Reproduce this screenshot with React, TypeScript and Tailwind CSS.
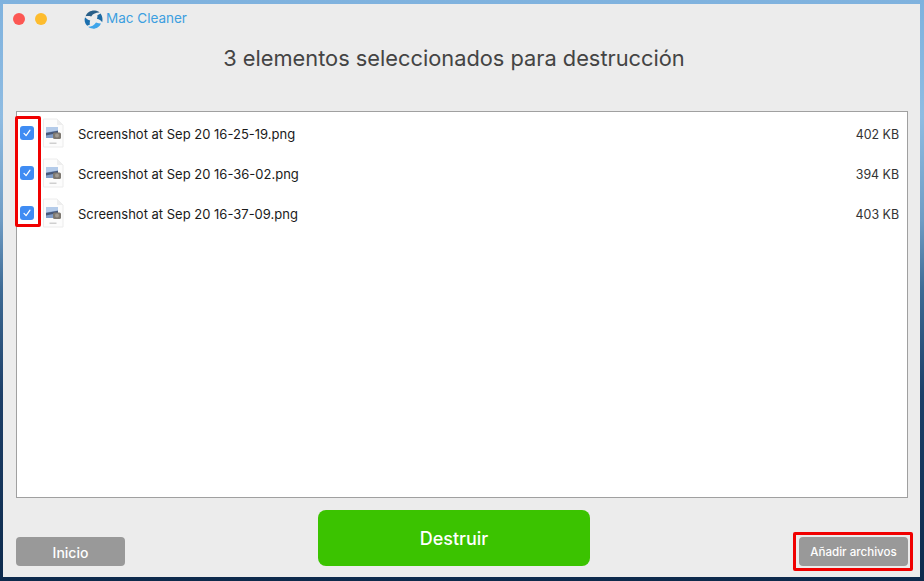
const rows = [
  { name: "Screenshot at Sep 20 16-25-19.png", size: "402 KB" },
  { name: "Screenshot at Sep 20 16-36-02.png", size: "394 KB" },
  { name: "Screenshot at Sep 20 16-37-09.png", size: "403 KB" },
];

function Logo() {
  return (
    <svg width="19" height="19" viewBox="0 0 19 19" className="shrink-0">
      <path d="M1.6 6.2 C3 2.4 7 0.2 11 0.6 C13 0.8 14.6 1.6 15.6 2.6 C12.6 2.4 9.2 3.4 7.2 6.4 C5.4 6 3.4 6 1.6 6.2Z" fill="#2a5f88" />
      <path d="M13.4 5.2 L16.6 3.6 C18.4 6 19 9.4 18.2 12.2 C17 10.4 15.2 9.2 12.9 8.8 C13.5 7.6 13.6 6.4 13.4 5.2Z" fill="#1d6aa3" />
      <path d="M17 13.4 C15.6 16.8 12 19 8.4 18.6 C6.8 18.4 5.2 17.8 4.2 16.8 C7.4 16.8 10.4 15.4 12 12.6 C13.8 13.2 15.4 13.4 17 13.4Z" fill="#3fa5ea" />
      <path d="M3.2 15.8 C0.8 13.6 0 9.8 1 7.2 C2.4 8.8 4 10 6.2 10.4 C5.6 12 5.6 13.4 6 14.6 Z" fill="#1b6fae" />
    </svg>
  );
}

function FileIcon() {
  return (
    <svg width="22" height="30" viewBox="0 0 22 30" className="shrink-0">
      <path d="M1.5 1 H15 L21 7 V29 H1.5 Z" fill="#fcfcfc" stroke="#ececec" strokeWidth="1" />
      <path d="M15 1 V7 H21 Z" fill="#eeeeee" />
      <rect x="4" y="9" width="12" height="11" fill="#7f9cc9" />
      <path d="M4 9 H16 V12.5 L4 14.5 Z" fill="#b4cbe9" />
      <path d="M4 15 L16 12.8 V15 L4 17.5 Z" fill="#47587a" />
      <rect x="11" y="14.5" width="8" height="6.5" rx="1.5" fill="#7d7871" />
      <circle cx="15" cy="17.5" r="2" fill="#a09b94" />
      <rect x="7.5" y="24.5" width="7" height="1.5" fill="#cfcfcf" />
    </svg>
  );
}

function Check() {
  return (
    <div className="w-[14px] h-[14px] rounded-[3px] bg-[#3f8cf3] flex items-center justify-center shrink-0">
      <svg width="10" height="10" viewBox="0 0 10 10" fill="none">
        <path d="M2 5.4 L4.1 7.6 L8 2.2" stroke="#fff" strokeWidth="1.2" strokeLinecap="round" strokeLinejoin="round" />
      </svg>
    </div>
  );
}

export default function App() {
  return (
    <div
      className="relative w-[924px] h-[581px] overflow-hidden pl-[3px] pr-[4px] pt-[4px] pb-[4px] bg-[linear-gradient(to_bottom,#7fb2de_0%,#8fbce2_20%,#6f9cc4_38%,#3d6a94_50%,#1d3f68_68%,#0d2a4c_100%)]"
      style={{ fontFamily: "Inter, 'Liberation Sans', sans-serif" }}
    >
      <div className="relative w-full h-full bg-[#ececec] flex flex-col pl-[13px] pr-[12px]">
        <div className="flex items-center h-[30px] shrink-0 -ml-[3px]">
          <div className="w-[12px] h-[12px] rounded-full bg-[#fc5753]" />
          <div className="w-[12px] h-[12px] rounded-full bg-[#fdbc2e] ml-[10px]" />
          <div className="ml-[37px] flex items-center gap-[3px]">
            <Logo />
            <span className="text-[13.5px] pb-[2px] text-[#3d9fe0]">Mac Cleaner</span>
          </div>
        </div>
        <h1 className="text-center text-[21.8px] leading-[30px] text-[#444444] font-normal mt-[9px] mr-[16px] h-[30px] shrink-0">
          3 elementos seleccionados para destrucción
        </h1>
        <div className="mt-[38px] h-[387px] shrink-0 bg-white border border-[#a0a0a0] pt-[1px]">
          {rows.map((r) => (
            <div key={r.name} className="flex items-center h-[40px] pl-[3px] pr-[8px]">
              <Check />
              <div className="ml-[8px]">
                <FileIcon />
              </div>
              <span className="ml-[14px] pt-[4px] text-[13px] text-[#1a1a1a]">{r.name}</span>
              <span className="ml-auto pt-[4px] text-[12.4px] text-[#333333]">{r.size}</span>
            </div>
          ))}
        </div>
        <div className="flex items-end justify-between mt-[12px] h-[56px] shrink-0">
          <button className="w-[109px] h-[29px] pt-[2px] rounded-[4px] bg-[#999999] text-white text-[14px] font-medium">Inicio</button>
          <button className="w-[272px] h-[56px] self-start mr-[16px] rounded-[8px] bg-[#3bc300] text-white text-[18px] font-medium">Destruir</button>
          <button className="w-[109px] h-[29px] pt-[2px] rounded-[4px] bg-[#999999] text-white text-[11.6px] font-medium">Añadir archivos</button>
        </div>
      </div>
      <div className="absolute left-[15px] top-[116px] w-[26px] h-[111px] border-[3px] border-[#f00000] rounded-[2px]" />
      <div className="absolute left-[793px] top-[532px] w-[120px] h-[39px] border-[3px] border-[#f00000] rounded-[2px]" />
    </div>
  );
}
